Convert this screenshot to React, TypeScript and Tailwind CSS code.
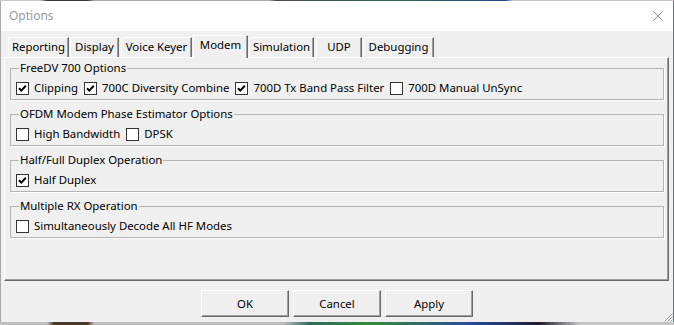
import React from 'react';

type Tab = { label: string; cls: string; active?: boolean };

const tabs: Tab[] = [
  { label: 'Reporting', cls: 'w-[61px]' },
  { label: 'Display', cls: 'w-[49px] ml-[1px]' },
  { label: 'Voice Keyer', cls: 'w-[71px] ml-[2px]' },
  { label: 'Modem', cls: 'w-[55px] ml-[1px]', active: true },
  { label: 'Simulation', cls: 'w-[65px] ml-[1px]' },
  { label: 'UDP', cls: 'w-[46px] ml-[2px]' },
  { label: 'Debugging', cls: 'w-[71px] ml-[1px]' },
];

const Check: React.FC<{ checked?: boolean }> = ({ checked }) => (
  <span className="w-[13px] h-[13px] border border-[#333333] bg-white flex items-center justify-center shrink-0">
    {checked && (
      <svg width="11" height="11" viewBox="0 0 11 11">
        <path d="M2 5.2 L4.3 7.6 L8.8 2.8" stroke="#000" strokeWidth="2" fill="none" />
      </svg>
    )}
  </span>
);

const CheckItem: React.FC<{ label: string; checked?: boolean }> = ({ label, checked }) => (
  <label className="flex items-center gap-[5px] leading-[14px]">
    <Check checked={checked} />
    <span>{label}</span>
  </label>
);

const Group: React.FC<{ title: string; children: React.ReactNode }> = ({ title, children }) => (
  <fieldset className="h-[39px] border border-[#b4b4b4] shadow-[1px_1px_0_#ffffff]">
    <legend className="ml-[8px] px-[1px] leading-[14px]">{title}</legend>
    <div className="flex items-center gap-[6px] pl-[5px] pt-[6px]">{children}</div>
  </fieldset>
);

const Button: React.FC<{ label: string }> = ({ label }) => (
  <button className="w-[88px] h-[27px] bg-[#f0f0f0] border-t border-l border-t-white border-l-white border-r border-b border-r-[#696969] border-b-[#696969] shadow-[inset_-1px_-1px_0_#a0a0a0] flex items-center justify-center">
    {label}
  </button>
);

export default function App() {
  return (
    <div className="w-[674px] h-[325px] overflow-hidden flex flex-col font-['Noto_Sans',sans-serif] text-[11.4px] text-black bg-[#bdbdbd]">
      <div className="h-[1px] bg-[linear-gradient(90deg,#c9c9c9_0%,#c9c9c9_6%,#3c3430_7%,#3c3430_13%,#a9a9a9_14%,#a9a9a9_40%,#4a4a4a_41%,#2a6a5a_60%,#2a3f8a_75%,#c7c7c7_76%,#c7c7c7_100%)]" />
      <div className="relative h-[321px] flex flex-col bg-[#f0f0f0] border-l border-l-[#a9a9a9] border-r border-r-[#5d7b7b]">
        {/* Title bar */}
        <div className="h-[30px] bg-white flex items-center justify-between pl-[8px] pr-[10px]">
          <span className="text-[#9b9ba3] text-[12px]">Options</span>
          <svg width="10" height="10" viewBox="0 0 10 10" className="mb-[1px]">
            <path d="M0.5 0.5 L9.5 9.5 M9.5 0.5 L0.5 9.5" stroke="#8a8a8a" strokeWidth="1" />
          </svg>
        </div>

        {/* Tabs */}
        <div className="h-[26px] flex items-end pl-[7px]">
          {tabs.map((t) =>
            t.active ? (
              <div
                key={t.label}
                className={`${t.cls} relative z-10 h-[23px] -mb-[1px] pb-[4px] bg-[#f0f0f0] border-t border-l border-t-white border-l-white border-r border-r-[#696969] shadow-[inset_-1px_0_0_#a0a0a0] flex items-center justify-center`}
              >
                {t.label}
              </div>
            ) : (
              <div
                key={t.label}
                className={`${t.cls} h-[20px] pb-[1px] bg-[#f0f0f0] border-t border-l border-t-white border-l-white border-r border-r-[#696969] shadow-[inset_-1px_0_0_#a0a0a0] flex items-center justify-center`}
              >
                {t.label}
              </div>
            ),
          )}
        </div>

        {/* Panel */}
        <div className="h-[224px] ml-[3px] mr-[4px] border-t border-l border-t-white border-l-white border-r border-b border-r-[#696969] border-b-[#696969] shadow-[inset_-1px_-1px_0_#a0a0a0] flex flex-col gap-[7px] pt-[3px] pl-[5px] pr-[4px]">
          <Group title="FreeDV 700 Options">
            <CheckItem label="Clipping" checked />
            <CheckItem label="700C Diversity Combine" checked />
            <CheckItem label="700D Tx Band Pass Filter" checked />
            <CheckItem label="700D Manual UnSync" />
          </Group>
          <Group title="OFDM Modem Phase Estimator Options">
            <CheckItem label="High Bandwidth" />
            <CheckItem label="DPSK" />
          </Group>
          <Group title="Half/Full Duplex Operation">
            <CheckItem label="Half Duplex" checked />
          </Group>
          <Group title="Multiple RX Operation">
            <CheckItem label="Simultaneously Decode All HF Modes" />
          </Group>
        </div>

        {/* Buttons */}
        <div className="flex-1 flex justify-center gap-[4px] pt-[9px]">
          <Button label="OK" />
          <Button label="Cancel" />
          <Button label="Apply" />
        </div>

        {/* Resize grip */}
        <svg width="10" height="10" viewBox="0 0 10 10" className="absolute right-0 bottom-0">
          <path d="M9.5 1.5 L1.5 9.5 M9.5 4.5 L4.5 9.5 M9.5 7.5 L7.5 9.5" stroke="#a0a0a0" strokeWidth="1" />
        </svg>
      </div>
      <div className="h-[3px] bg-[linear-gradient(90deg,#bfbfbf_0%,#bfbfbf_7%,#4a3a2a_8%,#4a3a2a_13%,#bdbdbd_14%,#bdbdbd_42%,#2e6a5a_46%,#3a8a3a_55%,#2a4a9a_70%,#1e1e2e_80%,#c4c4c4_86%,#c4c4c4_100%)]" />
    </div>
  );
}
